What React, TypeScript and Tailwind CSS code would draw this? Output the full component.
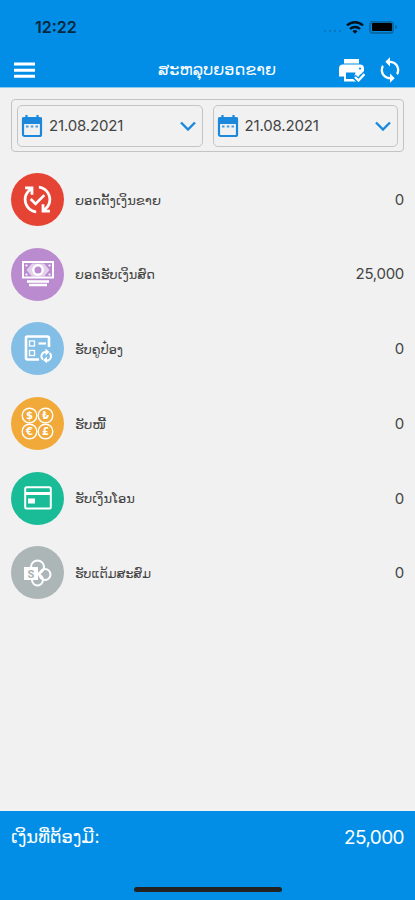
import { MdSync, MdOutlinePublishedWithChanges } from 'react-icons/md';
import type { ReactNode } from 'react';

type Item = {
  label: string;
  amount: string;
  color: string;
  width: number;
  icon: ReactNode;
};

function MenuIcon() {
  return (
    <svg viewBox="0 0 21 16" className="ml-[14px] h-4 w-[21px]" fill="none">
      <path d="M0 2h21M0 8.200h21M0 14.300h21" stroke="white" strokeWidth="3" />
    </svg>
  );
}

function CalendarIcon() {
  return (
    <svg viewBox="0 0 22 24" className="h-6 w-[22px] shrink-0" fill="none">
      <path d="M5.500 1v4M16.500 1v4" stroke="#1c88dc" strokeWidth="2.200" />
      <rect x="2" y="4" width="18" height="18" rx="1.5" stroke="#1c88dc" strokeWidth="2.200" />
      <path d="M1 3.500h20V10H1z" fill="#1c88dc" />
      <path d="M5 12.500h2.500M9.800 12.500h2.500M14.500 12.500H17" stroke="#1c88dc" strokeOpacity=".8" strokeWidth="1.800" />
    </svg>
  );
}

function PrinterCheckIcon() {
  return (
    <svg viewBox="0 0 27 24" className="ml-auto h-6 w-[27px]" fill="none">
      <path d="M6 1h15v4.500H6zM5 6.500h17a4 4 0 0 1 4 4v6H22l-4 7H6v-5H1v-8a4 4 0 0 1 4-4z" fill="white" />
      <path d="M8 14.500h9.500l-2 6.500H8z" fill="#028ee6" />
      <circle cx="22" cy="10.500" r="1.100" fill="#028ee6" />
      <path d="m16 18.500 4.500 4 7-7.500" stroke="#028ee6" strokeWidth="5" />
      <path d="m17 19 3.500 3.500 6-6.500" stroke="white" strokeWidth="2.400" />
    </svg>
  );
}

function CashIcon() {
  return (
    <svg viewBox="0 0 32 26" className="h-[26px] w-8" fill="none">
      <rect x="1" y="1" width="30" height="15.500" stroke="white" strokeWidth="2" />
      <path d="M10 2.500 4.500 9l5.500 6.500h12L27.500 9 22 2.500z" fill="white" fillOpacity=".6" />
      <circle cx="16" cy="9" r="4.700" fill="#ba8ccf" stroke="white" strokeWidth="2.400" />
      <circle cx="4.500" cy="4.500" r="1.100" fill="white" />
      <circle cx="27.500" cy="4.500" r="1.100" fill="white" />
      <circle cx="4.500" cy="13.500" r="1.100" fill="white" />
      <circle cx="27.500" cy="13.500" r="1.100" fill="white" />
      <path d="M5 20.500h22M7 24h18" stroke="white" strokeWidth="2.500" />
    </svg>
  );
}

function CouponIcon() {
  return (
    <svg viewBox="0 0 28 28" className="h-7 w-7" fill="none">
      <path d="M25 12V3a1.500 1.500 0 0 0-1.500-1.500h-20A1.500 1.500 0 0 0 2 3v20a1.500 1.500 0 0 0 1.500 1.500H15" stroke="white" strokeWidth="2.600" />
      <rect x="5.500" y="6" width="5" height="5" stroke="white" strokeWidth="1.300" />
      <rect x="5.500" y="15.500" width="5" height="5" stroke="white" strokeWidth="1.300" />
      <path d="M14.500 8.500H22" stroke="white" strokeWidth="2.200" />
      <path d="M19 24.500a4.300 4.300 0 0 1 3.500-7.500M25.500 18a4.300 4.300 0 0 1-3.500 7.500" stroke="white" strokeWidth="2" />
      <path d="m21.500 13.500 4 3.500-4 3.500zM23 21.500V28.500L19 25z" fill="white" />
    </svg>
  );
}

function CoinsIcon() {
  const coins = [
    { sign: '$', x: 8.5, y: 8.5 },
    { sign: '₺', x: 24.5, y: 8.5 },
    { sign: '€', x: 8.5, y: 24.5 },
    { sign: '£', x: 24.5, y: 24.5 },
  ];
  return (
    <svg viewBox="0 0 33 33" className="size-[33px]" fill="none">
      {coins.map((c) => (
        <g key={c.sign}>
          <circle cx={c.x} cy={c.y} r="7.300" stroke="white" strokeWidth="1.400" />
          <text x={c.x} y={c.y + 3.5} fill="white" fontSize="10" fontWeight="bold" textAnchor="middle" fontFamily="DejaVu Sans, sans-serif">
            {c.sign}
          </text>
        </g>
      ))}
    </svg>
  );
}

function CardIcon() {
  return (
    <svg viewBox="0 0 28 24" className="h-6 w-7" fill="none">
      <rect x="1.200" y="1.200" width="25.600" height="21.300" rx="1.500" stroke="white" strokeWidth="2" />
      <path d="M2 7.500h24" stroke="white" strokeWidth="3" />
      <rect x="4" y="12.500" width="7" height="5" fill="white" />
    </svg>
  );
}

function PointsIcon() {
  return (
    <svg viewBox="0 0 29 28" className="h-7 w-[29px]" fill="none">
      <circle cx="14.500" cy="8" r="6.500" stroke="white" strokeWidth="2" />
      <circle cx="22" cy="15.500" r="5.500" stroke="white" strokeWidth="2" />
      <circle cx="14.500" cy="21" r="5.500" stroke="white" strokeWidth="2" />
      <rect x="1" y="8" width="14" height="13" fill="white" />
      <text x="8" y="18.500" fill="#a9b3b4" fontSize="11" fontWeight="bold" textAnchor="middle" fontFamily="Roboto, sans-serif">S</text>
    </svg>
  );
}

const items: Item[] = [
  { label: 'ຍອດຕັ້ງເງິນຂາຍ', amount: '0', color: 'bg-[#e54434]', width: 86, icon: <MdOutlinePublishedWithChanges size={33} /> },
  { label: 'ຍອດຮັບເງິນສົດ', amount: '25,000', color: 'bg-[#ba8ccf]', width: 80, icon: <CashIcon /> },
  { label: 'ຮັບຄູປ໋ອງ', amount: '0', color: 'bg-[#82bee6]', width: 48, icon: <CouponIcon /> },
  { label: 'ຮັບໜີ້', amount: '0', color: 'bg-[#f1aa3a]', width: 31, icon: <CoinsIcon /> },
  { label: 'ຮັບເງິນໂອນ', amount: '0', color: 'bg-[#1abc98]', width: 60, icon: <CardIcon /> },
  { label: 'ຮັບແຕ້ມສະສົມ', amount: '0', color: 'bg-[#adb6b7]', width: 76, icon: <PointsIcon /> },
];

// Lao label squeezed to a fixed length
function LaoText({ text, width, size, className }: { text: string; width: number; size: number; className: string }) {
  return (
    <svg width={width} height="30" className={'overflow-visible ' + className}>
      <text x="0" y="20" fontSize={size} fill="currentColor" textLength={width} lengthAdjust="spacingAndGlyphs" fontFamily="DejaVu Sans, sans-serif">
        {text}
      </text>
    </svg>
  );
}

function DateField({ value }: { value: string }) {
  return (
    <button className="flex h-[42px] flex-1 items-center rounded-[5px] border border-[#c4c4c4] pl-[3px] pr-[6px]">
      <CalendarIcon />
      <span className="ml-[6px] flex-1 pt-px text-left text-[15px] tracking-[-0.15px] text-[#444]">{value}</span>
      <svg viewBox="0 0 16 10" className="h-[10px] w-4" fill="none">
        <path d="m1 1.500 7 7 7-7" stroke="#1c88dc" strokeWidth="2.400" />
      </svg>
    </button>
  );
}

export default function App() {
  return (
    <main className="flex h-[900px] w-full flex-col bg-[#f1f1f1] font-[Inter,sans-serif]">
      <header className="h-[88px] border-b border-[#8ec9ee] bg-[#028ee6]">
        <div className="flex h-[52px] items-center justify-between pl-[35px] pr-[18px] pt-[2px]">
          <span className="text-[16px] font-semibold text-[#07283d]">12:22</span>
          <div className="flex items-center">
            <span className="mr-[5px] flex gap-[3px] pt-2">
              {[0, 1, 2, 3].map((i) => (
                <span key={i} className="size-[2px] rounded-full bg-[#0671b5]" />
              ))}
            </span>
            <svg viewBox="0 0 18 13" className="h-[13px] w-[18px]" fill="none" stroke="#03121d" strokeWidth="2.300">
              <path d="M1 4.500a11.500 11.500 0 0 1 16 0M4 8a7.200 7.200 0 0 1 10 0" />
              <path d="m6.500 10.300 2.500 2.500 2.500-2.500a3.600 3.600 0 0 0-5 0z" fill="#03121d" stroke="none" />
            </svg>
            <span className="ml-[5px] flex h-[13px] w-[25px] rounded-[4px] border-2 border-[#0669a8] p-[0.5px]">
              <span className="flex-1 rounded-[1px] bg-black" />
            </span>
            <span className="ml-px h-1 w-[2px] rounded-r bg-[#0669a8]" />
          </div>
        </div>
        <div className="flex h-[35px] items-center pr-[11px] text-white">
          <MenuIcon />
          <LaoText text="ສະຫລຸບຍອດຂາຍ" width={118} size={16} className="ml-[123px]" />
          <PrinterCheckIcon />
          <MdSync size={28} className="ml-[11px]" />
        </div>
      </header>

      <section className="mx-[11px] mt-[11px] flex h-[53px] items-center gap-[10px] rounded-[4px] border border-[#c4c4c4] px-[5px]">
        <DateField value="21.08.2021" />
        <DateField value="21.08.2021" />
      </section>

      <ul className="mt-[21px] flex flex-1 flex-col gap-[21.7px] px-[11px]">
        {items.map((item) => (
          <li key={item.label} className="flex h-[53px] items-center">
            <span className={'flex size-[53px] items-center justify-center rounded-full text-white ' + item.color}>{item.icon}</span>
            <LaoText text={item.label} width={item.width} size={13} className="ml-[11px] text-[#444]" />
            <span className="ml-auto pt-px text-[15px] tracking-[-0.3px] text-[#444]">{item.amount}</span>
          </li>
        ))}
      </ul>

      <footer className="flex h-[89px] flex-col bg-[#028ee6] px-[11px] text-white">
        <div className="flex h-[54px] items-center justify-between">
          <LaoText text="ເງິນທີ່ຕ້ອງມີ:" width={89} size={17} className="" />
          <span className="pt-px text-[19px] tracking-[-0.6px]">25,000</span>
        </div>
        <div className="mx-auto mt-[22px] h-[5px] w-[148px] rounded-full bg-[#222]" />
      </footer>
    </main>
  );
}
